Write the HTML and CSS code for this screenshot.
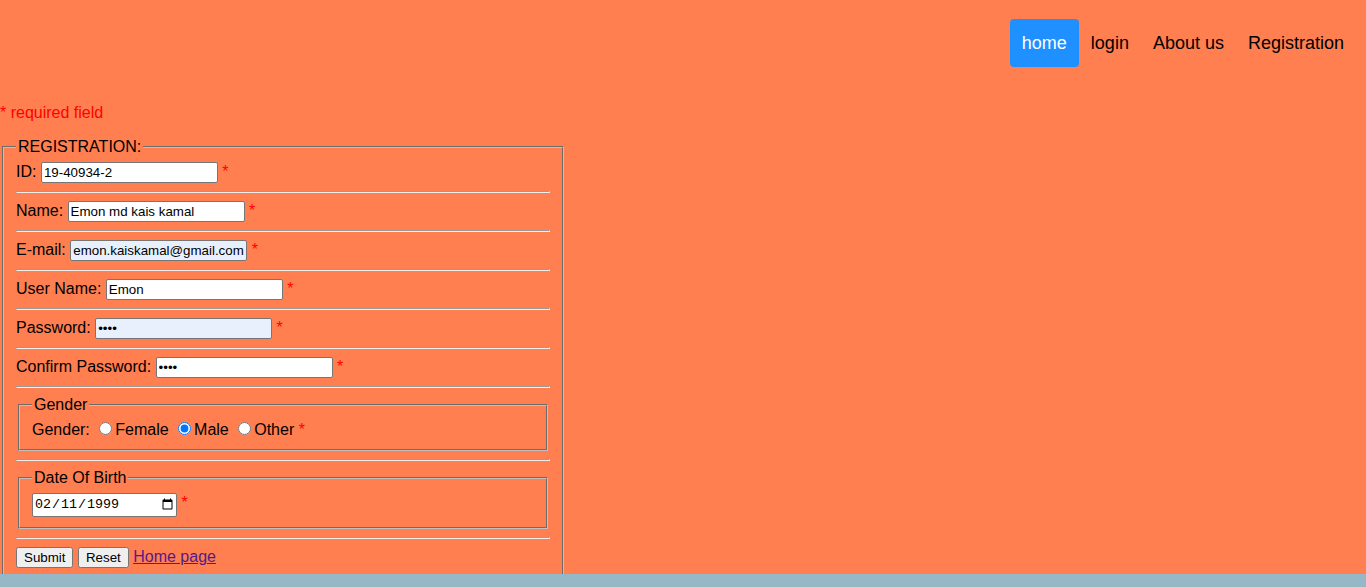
FILE: index.html
```html
<!DOCTYPE html>
<html lang="en">
<head>
<meta charset="utf-8">
<title>Registration</title>
<link rel="stylesheet" href="styles.css">
</head>
<body>
<header class="topbar">
  <nav class="menu">
    <a class="menu-link active" href="#">home</a>
    <a class="menu-link" href="#">login</a>
    <a class="menu-link" href="#">About us</a>
    <a class="menu-link" href="#">Registration</a>
  </nav>
</header>
<p class="required-note">* required field</p>
<form class="reg-form">
  <fieldset class="reg-fieldset">
    <legend>REGISTRATION:</legend>
    <div class="row">ID: <input class="txt" type="text" value="19-40934-2"> <span class="req">*</span></div>
    <hr>
    <div class="row">Name: <input class="txt" type="text" value="Emon md kais kamal"> <span class="req">*</span></div>
    <hr>
    <div class="row">E-mail: <input class="txt autofill" type="text" value="emon.kaiskamal@gmail.com"> <span class="req">*</span></div>
    <hr>
    <div class="row">User Name: <input class="txt" type="text" value="Emon"> <span class="req">*</span></div>
    <hr>
    <div class="row">Password: <input class="txt autofill" type="password" value="abcd"> <span class="req">*</span></div>
    <hr>
    <div class="row">Confirm Password: <input class="txt" type="password" value="abcd"> <span class="req">*</span></div>
    <hr>
    <fieldset class="sub-fieldset">
      <legend>Gender</legend>
      <div class="row">Gender: <input type="radio" name="g"><span class="opt">Female</span> <input type="radio" name="g" checked><span class="opt">Male</span> <input type="radio" name="g"><span class="opt">Other</span> <span class="req">*</span></div>
    </fieldset>
    <hr>
    <fieldset class="sub-fieldset">
      <legend>Date Of Birth</legend>
      <div class="row"><input class="date" type="date" value="1999-02-11"> <span class="req">*</span></div>
    </fieldset>
    <hr>
    <div class="row"><input class="btn" type="submit" value="Submit"> <input class="btn" type="reset" value="Reset"> <a class="home-link" href="#">Home page</a></div>
  </fieldset>
</form>
<footer class="bottom-bar"></footer>
</body>
</html>
```

FILE: styles.css
```css
html, body {
  margin: 0;
  padding: 0;
}
body {
  background: #FF7F50;
  font-family: "Liberation Sans", Arial, sans-serif;
  font-size: 16px;
  color: #000;
}
.topbar {
  display: flex;
  justify-content: flex-end;
  padding: 19px 10px 0 0;
}
.menu {
  display: flex;
}
.menu-link {
  display: block;
  padding: 14px 12px 13px;
  font-size: 18px;
  line-height: 21px;
  color: #000;
  text-decoration: none;
  border-radius: 4px;
}
.menu-link.active {
  background: #1E90FF;
  color: #fff;
}
.required-note {
  margin: 37px 0 0;
  color: red;
  line-height: 18px;
}
.reg-form {
  margin: 16px 0 0;
}
.reg-fieldset {
  width: 534px;
  margin: 0 2px;
  border: 2px groove #c0c0c0;
}
.sub-fieldset {
  margin: 0 2px;
  border: 2px groove #c0c0c0;
}
.txt {
  box-sizing: border-box;
  width: 177px;
  height: 21px;
  font: 13.333px "Liberation Sans", Arial, sans-serif;
  padding: 1px 2px;
  border: 1px solid #767676;
  border-radius: 2px;
  background: #fff;
  color: #000;
}
.txt.autofill {
  background: #E8F0FE;
}
.date {
  box-sizing: border-box;
  width: 145px;
  height: 24px;
  font: 13.333px "Liberation Mono", monospace;
  border: 1px solid #767676;
  border-radius: 2px;
  background: #fff;
}
.req {
  color: red;
}
.btn {
  font: 13.333px "Liberation Sans", Arial, sans-serif;
}
.home-link {
  color: #551A8B;
}
.bottom-bar {
  position: fixed;
  left: 0;
  right: 0;
  bottom: 0;
  height: 13px;
  background: #96B8C6;
}
```
